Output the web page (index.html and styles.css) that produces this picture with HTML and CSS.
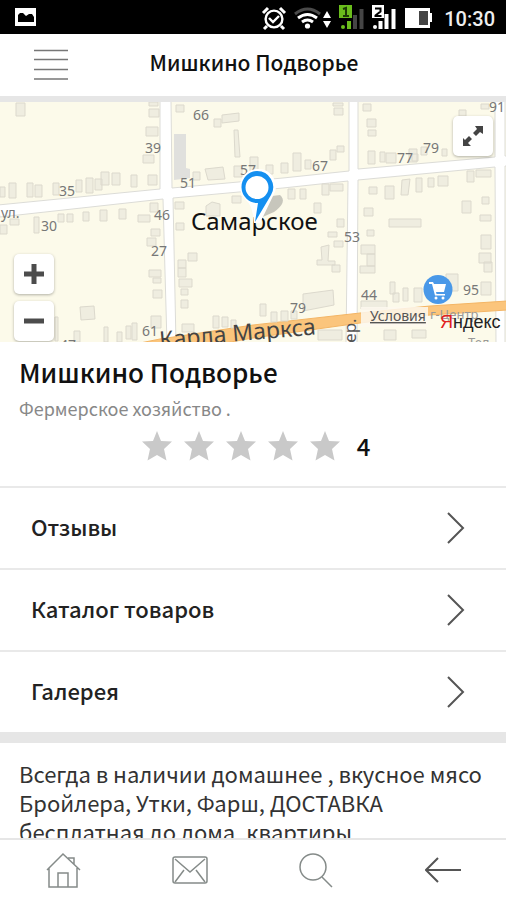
FILE: index.html
```html
<!DOCTYPE html>
<html lang="ru">
<head>
<meta charset="utf-8">
<meta name="viewport" content="width=device-width, initial-scale=1">
<title>Мишкино Подворье</title>
<link rel="stylesheet" href="styles.css">
</head>
<body>
<div class="status">
  <svg class="status-photo" width="22" height="18" viewBox="0 0 22 18" aria-hidden="true"><path fill="#fff" d="M0 0h21v18H0z"/><path d="M3 14V7l2-2h3l3 3 3-2h3l2 3v5z"/></svg>
  <svg class="status-icons" width="172" height="28" viewBox="262 3 172 28" aria-hidden="true">
    <g fill="none" stroke="#fff" stroke-width="2.4"><circle cx="276" cy="19" r="8.4"/><path d="M265 13l5-5M282 8l5 5M269 26l-3 3M283 26l3 3" stroke-width="3"/><path d="M271 18l4 4 6-6"/></g>
    <g fill="none" stroke-width="3"><path stroke="#4a4a4a" d="M297 14q12.500-10 25 0"/><path stroke="#fff" d="M300 18q9.500-7 19 0M304 22q5.500-4 11 0"/></g><circle cx="309.500" cy="26" r="2.600" fill="#fff"/>
    <path fill="#fff" d="M325 18l4-7 4 7zM325 21h8l-4 7z"/>
    <path fill="#6abd1c" d="M341 5h13v13h-13z"/><path fill="none" stroke="#1c3905" stroke-width="2" d="M345 9l3-1v8M345 16h6"/><circle cx="345" cy="27" r="2" fill="#6abd1c"/><path stroke="#6abd1c" stroke-width="4" d="M351 29v-8"/><path stroke="#454545" stroke-width="4" d="M357 29V15M363.500 29V9"/>
    <path fill="#fff" d="M374 5h12v13h-12z"/><path fill="none" stroke="#000" stroke-width="2" d="M377 8.500h5.500v3l-5 4v.5h6"/><circle cx="377" cy="27" r="2" fill="#fff"/><path stroke="#fff" stroke-width="4" d="M382.500 29v-8M388.500 29V14M395.500 29V9"/>
    <path fill="#fff" d="M407 8h25v5h3v9h-3v6h-25z"/><path fill="#444" d="M421 11h9v14h-9z"/>
  </svg>
  <time class="clock">10:30</time>
</div>

<header class="header">
  <button class="menu" aria-label="Меню"><svg width="34" height="32" viewBox="0 0 34 32"><path d="M0 1.500h34M0 10.500h34M0 20.500h34M0 30h34" stroke="#777" stroke-width="1.500"/></svg></button>
  <h1 class="header-title">Мишкино Подворье</h1>
</header>

<main class="content">
  <section class="map" aria-label="Карта">
    <svg class="map-canvas" viewBox="0 102 506 240" preserveAspectRatio="xMidYMid slice">
      <path fill="#fcfaea" d="M0 102h506v240H0z"/>
      <path fill="#fff" stroke="#dcdcd7" d="M-2 205L160 189V101h11l1 87L283 178l66-7V101h9v68l137-12V101h10v55h3v10h-3v178h-9l-1-177-137 13-1 164h-11l2-163-65 7-110 10 3 146h-9l-4-145L0 217z"/>
      <path fill="#fbc57c" stroke="#f3b565" d="M140 343l20-4 93-14 107-12 70-7 77-5v9l-77 5-70 8-107 15-28 5z"/>
      <path fill="#e0e0dd" d="M174 134h12v34l4 1v9l-16 2z"/>
      <g fill="#efede0" stroke="#dcd9cd">
        <path d="M16 103h9v13h-9zM149 102h9v4h-9zM149 109h10v8h-10zM146 127h12v9h-12zM143 155h11v8h-11zM148 175h9v10h-9zM131 175h6v12h-6zM112 173h8v12h-8zM101 172h8v13h-8zM95 179h7v11h-7zM86 178h7v15h-7zM76 180h6v12h-6zM53 183h6v12h-6zM35 185h7v12h-7zM27 183h6v14h-6zM9 183h7v15h-7zM0 187h5v10h-5z"/>
        <path d="M176 105h8v7h-8zM222 115l17-2v8l-17 2zM214 119h7v8h-7zM234 130h4l2 27h-5zM193 172h7v8h-7zM205 169l18-2 2 12-17 1zM234 166h8v11h-8zM250 157h8v14h-8zM175 202h9v7h-9zM206 206l6-4 8 2v12h-14zM232 196h9v7h-9z"/>
        <path d="M333 103h10v3h-10zM334 108h9v7h-9zM363 104h8v7h-8zM367 119h9v8h-9zM368 130h8v6h-8zM368 151h7v13h-7zM380 152h5v10h-5zM386 153h10v10h-10zM409 149h8v13h-8zM421 147h6v8h-6zM412 154h6v7h-6zM442 149h5v7h-5zM330 150h6v10h-6zM337 146h7v6h-7zM305 160h6v9h-6zM293 153h8v18h-8zM281 163h7v10h-7zM266 165h7v9h-7zM481 104h8v5h-8zM459 110h7v6h-7z"/>
        <path d="M288 189h7v10h-7zM300 189h6v10h-6zM322 184h7v11h-7zM330 184h13v7h-13zM314 203h7v10h-7zM369 187h8v7h-8zM385 186h9v13h-9zM402 180l8-1-2 16h-7zM416 178h6v14h-6zM428 178h6v9h-6zM438 176h10v10h-10zM467 171h7v11h-7zM476 170h15v7h-15zM462 201h9v12h-9zM482 197h7v7h-7zM480 215h11v6h-11zM364 208h9v8h-9zM389 219h32v8h-32zM337 219h7v8h-7z"/>
        <path d="M0 225h7v9h-7zM10 219h9v6h-9zM34 217h5v16h-5zM58 214h6v8h-6zM67 214h6v8h-6zM83 212h6v9h-6zM100 210h7v11h-7zM119 209h7v10h-7zM138 215h12v7h-12zM150 203h8v9h-8zM151 229h9v7h-9zM147 238h9v8h-9zM149 270h12v7h-12zM153 278h8v5h-8zM153 290h9v8h-9zM80 307l14-1 1 13-14 1zM74 331h6v11h-6zM104 327h4v15h-4zM117 332h5v10h-5zM126 326h5v13h-5zM132 323h5v17h-5zM151 316h10v12h-10zM55 317h3v24h-3z"/>
        <path d="M176 223h8v7h-8zM188 253h9v8h-9zM178 260h8v8h-8zM178 268h8v9h-8zM179 279h13v8h-13zM181 289h7v6h-7zM181 300h7v8h-7zM182 324h12v8h-12zM213 316h6v12h-6zM222 317h6v10h-6zM231 320h5v8h-5z"/>
        <path d="M328 232h9v5h-9zM334 241h9v6h-9zM321 247l8-2-1 16h7v4h-18v-5h5zM332 265h8v7h-8zM303 294l30-4 1 15-31 6zM260 304h6v12h-6zM271 312h6v10h-6zM281 311h7v10h-7zM291 311h6v8h-6zM367 230h7v6h-7zM361 245h14v9h-14zM367 254h8v12h-8zM360 266h15v7h-15zM481 235h10v14h-10zM479 253h12v10h-12zM484 262h8v10h-8zM390 282h5v12h-5zM393 293h6v9h-6zM403 288h5v13h-5zM414 288h8v14h-8zM446 274h12v17h-12zM481 282h10v13h-10zM361 301h26v8h-26zM318 330h24v10h-24zM384 330h12v10h-12zM412 330h14v8h-14z"/>
      </g>
      <path fill="#fdf8ee" fill-opacity=".85" d="M361 307h67v20h-67z"/>
      <g class="house-numbers">
        <text x="193" y="120">66</text><text x="145" y="153">39</text><text x="59" y="196">35</text><text x="180" y="188">51</text><text x="154" y="220">46</text><text x="41" y="231">30</text><text x="151" y="256">27</text><text x="240" y="175">57</text><text x="312" y="171">67</text><text x="397" y="163">77</text><text x="423" y="153">79</text><text x="489" y="112">91</text><text x="344" y="242">53</text><text x="361" y="300">44</text><text x="463" y="295">95</text><text x="290" y="313">79</text><text x="142" y="336">61</text><text x="60" y="350">47</text><text x="1" y="218">ул.</text>
      </g>
      <text class="street" transform="rotate(-5 160 347)" x="160" y="348">Карла Маркса</text>
      <text class="lane" transform="rotate(-90 356 340)" x="343" y="340">пер.</text>
      <text class="place" x="191" y="230">Самарское</text>
      <path fill="#777" fill-opacity=".4" d="M258 219l14-23 8-1q8 7-6 17z"/>
      <path fill="#fff" d="M257 169a17.500 17.500 0 0 0-12 30q8 6 9 24h6l13-27a17.500 17.500 0 0 0-16-27z"/>
      <path fill="#148ff0" fill-rule="evenodd" d="M257 171a16 16 0 1 0 1 32l-3 19 16-27a16 16 0 0 0-14-24zm0 5a11.500 11.500 0 1 1 0 23 11.500 11.500 0 0 1 0-23z"/>
      <circle cx="438" cy="289.500" r="14.500" fill="#4998e8"/>
      <path fill="#fff" d="M429 282h4l1 2h12l-2 8h-8l.5 2H445v1.500h-10L432 284h-3z"/><circle cx="436" cy="298" r="1.500" fill="#fff"/><circle cx="443" cy="298" r="1.500" fill="#fff"/>
      <text class="poi" x="430" y="319">г-Центр</text>
      <text class="poi" x="468" y="347">Тел</text>
      <text class="terms" x="370" y="321">Условия</text>
      <text class="yandex" x="440" y="328"><tspan class="yandex-first">Я</tspan>ндекс</text>
    </svg>
    <button class="map-button expand" aria-label="Развернуть карту"><svg width="22" height="22" viewBox="0 0 22 22"><path fill="#444" d="M13 1h8v8l-3-2-4 4-3-3 4-4zM1 13l2 2 4-4 3 3-4 4 3 3H1z"/></svg></button>
    <div class="zoom">
      <button class="map-button" aria-label="Приблизить"><svg width="20" height="20" viewBox="0 0 20 20"><path d="M10 0v20M0 10h20" stroke="#4c4c4c" stroke-width="5"/></svg></button>
      <button class="map-button" aria-label="Отдалить"><svg width="20" height="20" viewBox="0 0 20 20"><path d="M0 10h20" stroke="#4c4c4c" stroke-width="5"/></svg></button>
    </div>
  </section>

  <section class="info">
    <h2 class="name">Мишкино Подворье</h2>
    <p class="kind">Фермерское хозяйство .</p>
    <div class="rating">
      <svg class="stars" width="200" height="30" viewBox="0 0 200 30" fill="#c9c9c9" aria-hidden="true">
        <defs><path id="star" d="M16 0l4 10 11 .5-8 7.500 2.500 11.500L16 24l-9.500 5.500L9 18l-8-7.500 11-.5z"/></defs>
        <use href="#star"/><use href="#star" x="42"/><use href="#star" x="84"/><use href="#star" x="126"/><use href="#star" x="168"/>
      </svg>
      <span class="score">4</span>
    </div>
  </section>

  <nav class="links">
    <a class="link" href="#reviews"><span class="label">Отзывы</span><svg class="chevron" width="18" height="32" viewBox="0 0 18 32"><path d="M1 1l15 15L1 31"/></svg></a>
    <a class="link" href="#catalog"><span class="label">Каталог товаров</span><svg class="chevron" width="18" height="32" viewBox="0 0 18 32"><path d="M1 1l15 15L1 31"/></svg></a>
    <a class="link" href="#gallery"><span class="label">Галерея</span><svg class="chevron" width="18" height="32" viewBox="0 0 18 32"><path d="M1 1l15 15L1 31"/></svg></a>
  </nav>

  <p class="about">Всегда в наличии домашнее , вкусное мясо Бройлера, Утки, Фарш, ДОСТАВКА бесплатная до дома, квартиры</p>
</main>

<nav class="tabs">
  <button class="tab" aria-label="Главная"><svg width="36" height="38" viewBox="0 0 36 38"><path d="M2 19L18 3l17 16M4 17v19h28V17M13 36V22h10v14M23 7h6v6"/></svg></button>
  <button class="tab" aria-label="Сообщения"><svg width="36" height="38" viewBox="0 0 36 38"><rect x="1" y="6" width="34" height="26" rx="2"/><path d="M3 8l15 13L33 8M3 31l9-12M33 31l-9-12"/></svg></button>
  <button class="tab" aria-label="Поиск"><svg width="36" height="38" viewBox="0 0 36 38"><circle cx="15" cy="16" r="13"/><path d="M24 26l10 10"/></svg></button>
  <button class="tab back" aria-label="Назад"><svg width="36" height="38" viewBox="0 0 36 38"><path d="M36 19H1M13 7L1 19l12 12"/></svg></button>
</nav>
</body>
</html>
```
FILE: styles.css
```css
* {
  box-sizing: border-box;
}

body {
  margin: 0;
  height: 100vh;
  display: flex;
  flex-direction: column;
  overflow: hidden;
  background: #fff;
  color: #111;
  font-family: "Noto Sans CJK SC", "Noto Sans", sans-serif;
}

h1, h2, p {
  margin: 0;
}

button {
  padding: 0;
  border: 0;
  background: none;
}

svg {
  display: block;
  flex: none;
}

.status {
  flex: none;
  display: flex;
  align-items: center;
  height: 34px;
  padding: 0 11px 0 15px;
  background: #000;
  color: #eee;
}

.status-icons {
  margin-left: auto;
}

.clock {
  margin-left: 12px;
  padding-top: 4px;
  font: 500 20px/30px Roboto, sans-serif;
}

.header {
  flex: none;
  display: grid;
  grid-template-columns: 34px 1fr 34px;
  align-items: center;
  height: 68px;
  padding: 0 32px 0 34px;
  border-bottom: 6px solid #e6e6e6;
}

.header-title {
  padding-bottom: 6px;
  text-align: center;
  font-size: 21px;
  line-height: 30px;
  font-weight: 500;
}

.content {
  flex: 1;
  min-height: 0;
  overflow: hidden;
}

.map {
  position: relative;
  height: 240px;
  overflow: hidden;
  font-family: "Noto Sans", sans-serif;
}

.map-canvas {
  width: 100%;
  height: 100%;
}

.house-numbers {
  font-size: 14px;
  fill: #777;
}

.street {
  font-size: 23px;
  fill: #444;
}

.lane {
  font-size: 17px;
  fill: #555;
}

.place {
  font-size: 24px;
  fill: #111;
}

.poi {
  font-size: 13px;
  fill: #999;
}

.terms {
  font-size: 14px;
  fill: #555;
  text-decoration: underline;
}

.yandex {
  font-family: "Liberation Sans", sans-serif;
  font-size: 18px;
  fill: #222;
}

.yandex-first {
  fill: #e02020;
}

.map-button {
  display: grid;
  place-items: center;
  width: 40px;
  height: 40px;
  border-radius: 5px;
  background: #fff;
  box-shadow: 0 1px 3px rgba(0, 0, 0, .3);
}

.expand {
  position: absolute;
  top: 14px;
  right: 13px;
}

.zoom {
  position: absolute;
  top: 152px;
  left: 14px;
  display: grid;
  gap: 7px;
}

.info {
  padding: 12px 14px 15px 19px;
}

.name {
  font-size: 26px;
  line-height: 36px;
  font-weight: 500;
}

.kind {
  margin-top: 6px;
  font-size: 18px;
  line-height: 24px;
  color: #888;
}

.rating {
  display: flex;
  justify-content: center;
  align-items: center;
  gap: 16px;
  height: 51px;
}

.score {
  font-size: 24px;
  line-height: 32px;
  font-weight: 500;
}

.link {
  display: flex;
  justify-content: space-between;
  align-items: center;
  height: 82px;
  padding: 0 41px 0 31px;
  border-top: 2px solid #e9e9e9;
  color: #222;
  font-size: 22px;
  font-weight: 500;
  text-decoration: none;
}

.label {
  padding-bottom: 5px;
}

.chevron {
  fill: none;
  stroke: #555;
  stroke-width: 2;
}

.about {
  padding: 16px 19px;
  border-top: 11px solid #e6e6e6;
  font-size: 22px;
  line-height: 29px;
  color: #333;
}

.tabs {
  flex: none;
  display: grid;
  grid-template-columns: repeat(4, 1fr);
  height: 62px;
  border-top: 2px solid #e6e6e6;
}

.tab {
  display: grid;
  place-items: center;
  fill: none;
  stroke: #858b89;
  stroke-width: 1.5;
}

.back {
  stroke: #555;
  stroke-width: 2;
}
```
